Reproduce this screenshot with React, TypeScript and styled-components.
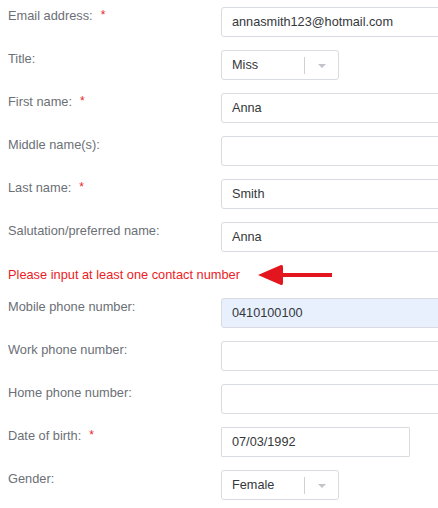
import React from "react";
import styled, { createGlobalStyle } from "styled-components";

const Global = createGlobalStyle`
  html, body { margin: 0; padding: 0; background: #fff; overflow: hidden; }
  body { font-family: "Liberation Sans", Arial, sans-serif; }
`;

const Form = styled.div`
  display: flex;
  flex-direction: column;
  gap: 13px;
  padding: 7px 0 0 8px;
  overflow: hidden;
`;

const Row = styled.div`
  display: grid;
  grid-template-columns: 213px auto;
  align-items: start;
`;

const Label = styled.div`
  font-size: 12.8px;
  line-height: 16px;
  padding-top: 1px;
  color: #6b6f76;
  white-space: nowrap;
`;

const Req = styled.span`
  color: #e8262b;
  margin-left: 8px;
  font-size: 12px;
  position: relative;
  top: -1px;
`;

const Field = styled.div<{ $w: number; $filled?: boolean; $square?: boolean }>`
  box-sizing: border-box;
  width: ${(p) => p.$w}px;
  height: 30px;
  border: 1px solid #d8dbe0;
  border-radius: ${(p) => (p.$square ? "1px" : "3px")};
  background: ${(p) => (p.$filled ? "#e8f0fe" : "#fff")};
  padding: 0 10px 1px;
  display: flex;
  align-items: center;
  font-size: 12.7px;
  color: #34373b;
  white-space: nowrap;
`;

const Select = styled.div<{ $w: number }>`
  box-sizing: border-box;
  width: ${(p) => p.$w}px;
  height: 30px;
  border: 1px solid #d8dbe0;
  border-radius: 3px;
  background: #fff;
  display: flex;
  align-items: center;
  font-size: 12.7px;
  color: #34373b;
  padding-left: 10px;
`;

const SelValue = styled.span`
  flex: 1;
  padding-bottom: 1px;
`;

const Divider = styled.span`
  width: 1px;
  height: 17px;
  background: #ced1d6;
`;

const Caret = styled.span`
  width: 33px;
  display: flex;
  justify-content: center;
  align-items: center;
  &::after {
    content: "";
    border-left: 4px solid transparent;
    border-right: 4px solid transparent;
    border-top: 4px solid #c1c4c9;
    margin-top: 2px;
  }
`;

const ErrorRow = styled.div`
  display: flex;
  align-items: center;
  height: 20px;
`;

const ErrorText = styled.span`
  font-size: 12.8px;
  color: #ec1c24;
  line-height: 20px;
`;

const Arrow = styled.svg`
  margin-left: 16px;
  margin-top: -1px;
  flex: none;
`;

type RowDef = { label: string; req?: boolean; kind: "input" | "select"; value?: string; w: number; filled?: boolean; square?: boolean };

const top: RowDef[] = [
  { label: "Email address:", req: true, kind: "input", value: "annasmith123@hotmail.com", w: 240 },
  { label: "Title:", kind: "select", value: "Miss", w: 118 },
  { label: "First name:", req: true, kind: "input", value: "Anna", w: 240 },
  { label: "Middle name(s):", kind: "input", w: 240 },
  { label: "Last name:", req: true, kind: "input", value: "Smith", w: 240 },
  { label: "Salutation/preferred name:", kind: "input", value: "Anna", w: 240 },
];

const bottom: RowDef[] = [
  { label: "Mobile phone number:", kind: "input", value: "0410100100", w: 240, filled: true },
  { label: "Work phone number:", kind: "input", w: 240 },
  { label: "Home phone number:", kind: "input", w: 240 },
  { label: "Date of birth:", req: true, kind: "input", value: "07/03/1992", w: 189, square: true },
  { label: "Gender:", kind: "select", value: "Female", w: 118 },
];

function FormRow({ r }: { r: RowDef }) {
  return (
    <Row>
      <Label>
        {r.label}
        {r.req && <Req>*</Req>}
      </Label>
      {r.kind === "input" ? (
        <Field $w={r.w} $filled={r.filled} $square={r.square}>{r.value}</Field>
      ) : (
        <Select $w={r.w}>
          <SelValue>{r.value}</SelValue>
          <Divider />
          <Caret />
        </Select>
      )}
    </Row>
  );
}

export default function App() {
  return (
    <>
      <Global />
      <Form>
        {top.map((r) => (
          <FormRow key={r.label} r={r} />
        ))}
        <ErrorRow>
          <ErrorText>Please input at least one contact number</ErrorText>
          <Arrow width="77" height="24" viewBox="0 0 77 24">
            <path d="M2 12 L25 2 Q27 1.5 27 4 L27 10 L76 10 L76 14 L27 14 L27 20 Q27 22.5 25 22 Z" fill="#e3151f" />
          </Arrow>
        </ErrorRow>
        {bottom.map((r) => (
          <FormRow key={r.label} r={r} />
        ))}
      </Form>
    </>
  );
}
